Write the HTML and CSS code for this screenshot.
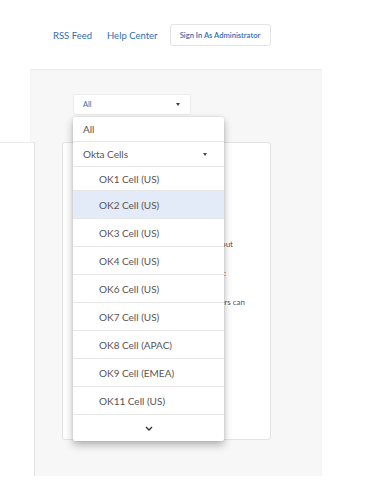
FILE: index.html
```html
<!DOCTYPE html>
<html>
<head>
<meta charset="utf-8">
<link rel="stylesheet" href="styles.css">
</head>
<body>
<header class="topbar">
  <a class="toplink" href="#">RSS Feed</a>
  <a class="toplink toplink-last" href="#">Help Center</a>
  <button class="admin-btn">Sign In As Administrator</button>
</header>
<main class="main">
  <div class="select-wrap">
    <div class="select">
      <span class="select-value">All</span>
      <span class="caret"></span>
    </div>
    <ul class="menu">
      <li class="item item-top">All</li>
      <li class="item item-group">Okta Cells <span class="caret caret-group"></span></li>
      <li class="item item-first">OK1 Cell (US)</li>
      <li class="item item-cell active">OK2 Cell (US)</li>
      <li class="item item-cell">OK3 Cell (US)</li>
      <li class="item item-cell">OK4 Cell (US)</li>
      <li class="item item-cell">OK6 Cell (US)</li>
      <li class="item item-cell">OK7 Cell (US)</li>
      <li class="item item-cell">OK8 Cell (APAC)</li>
      <li class="item item-cell">OK9 Cell (EMEA)</li>
      <li class="item item-cell">OK11 Cell (US)</li>
      <li class="item item-more">
        <svg width="8" height="5" viewBox="0 0 8 5"><path d="M1 1 L4 4 L7 1" fill="none" stroke="#333" stroke-width="1.4"/></svg>
      </li>
    </ul>
  </div>
  <div class="cards">
    <div class="card-left"></div>
    <div class="card">
      <div class="line l1">Subscribe to updates about</div>
      <div class="line l2">Select a cell:</div>
      <div class="line l3">Okta customers can</div>
    </div>
  </div>
</main>
</body>
</html>
```
FILE: styles.css
```css
* { box-sizing: border-box; }
html, body { margin: 0; padding: 0; background: #fff; }
body { font-family: Lato, "Open Sans", sans-serif; color: #5d5d5d; width: 369px; height: 501px; overflow: hidden; }

.topbar {
  height: 69px;
  display: flex;
  align-items: center;
  padding-left: 53px;
  padding-top: 1px;
}
.toplink {
  font-size: 9.5px;
  color: #2f6db3;
  text-decoration: none;
  margin-right: 15px;
}
.toplink-last { margin-right: 12px; }
.admin-btn {
  height: 22px;
  width: 101px;
  padding: 0;
  border: 1px solid #e3e3e3;
  border-radius: 3px;
  background: #fff;
  font-family: Lato, sans-serif;
  font-size: 7.6px;
  font-weight: 600;
  color: #2f6db3;
}

.main {
  margin-left: 30px;
  width: 292px;
  height: 407px;
  background: #f7f7f7;
  box-shadow: inset 0 1px 2px rgba(0,0,0,0.06);
  padding-top: 25px;
}

.select-wrap {
  position: relative;
  margin-left: 43px;
  width: 118px;
}
.select {
  height: 21px;
  background: #fff;
  border: 1px solid #ececec;
  border-radius: 2px;
  display: flex;
  align-items: center;
  justify-content: space-between;
  padding: 0 10px 0 9px;
}
.select-value { font-size: 7.5px; color: #2f6db3; }
.caret {
  width: 0; height: 0;
  border-left: 2.5px solid transparent;
  border-right: 2.5px solid transparent;
  border-top: 3px solid #3a3f48;
}

.menu {
  position: absolute;
  top: 23px;
  left: 0;
  width: 151px;
  margin: 0;
  padding: 0;
  list-style: none;
  background: #fff;
  border-radius: 2px;
  box-shadow: 0 4px 9px rgba(0,0,0,0.28), 0 0 3px rgba(0,0,0,0.12);
  z-index: 5;
}
.item {
  display: flex;
  align-items: center;
  font-size: 10px;
  color: #555;
  border-bottom: 1px solid #e6e6e6;
}
.item-top { height: 25px; padding-left: 10px; }
.item-group { height: 25px; padding-left: 10px; padding-right: 17px; justify-content: space-between; }
.caret-group { border-top-color: #444; }
.item-first { height: 24px; padding-left: 26px; }
.item-cell { height: 28px; padding-left: 26px; }
.item-cell.active { background: #e4ebf8; }
.item-more { height: 26px; justify-content: center; border-bottom: none; }

.cards {
  display: flex;
  margin-top: 27px;
  margin-left: -30px;
}
.card-left {
  width: 35px;
  height: 334px;
  background: #fff;
  border-right: 1px solid #e2e2e2;
  border-top: 1px solid #ececec;
}
.card {
  margin-left: 27px;
  width: 209px;
  height: 298px;
  background: #fff;
  border: 1px solid #e3e3e3;
  border-radius: 3px;
  padding-top: 96px;
}
.line {
  height: 29px;
  font-size: 8px;
  color: #555;
  text-align: right;
  white-space: nowrap;
}
.l1 { padding-right: 37px; }
.l2 { padding-right: 44px; }
.l3 { padding-right: 25px; }
```
